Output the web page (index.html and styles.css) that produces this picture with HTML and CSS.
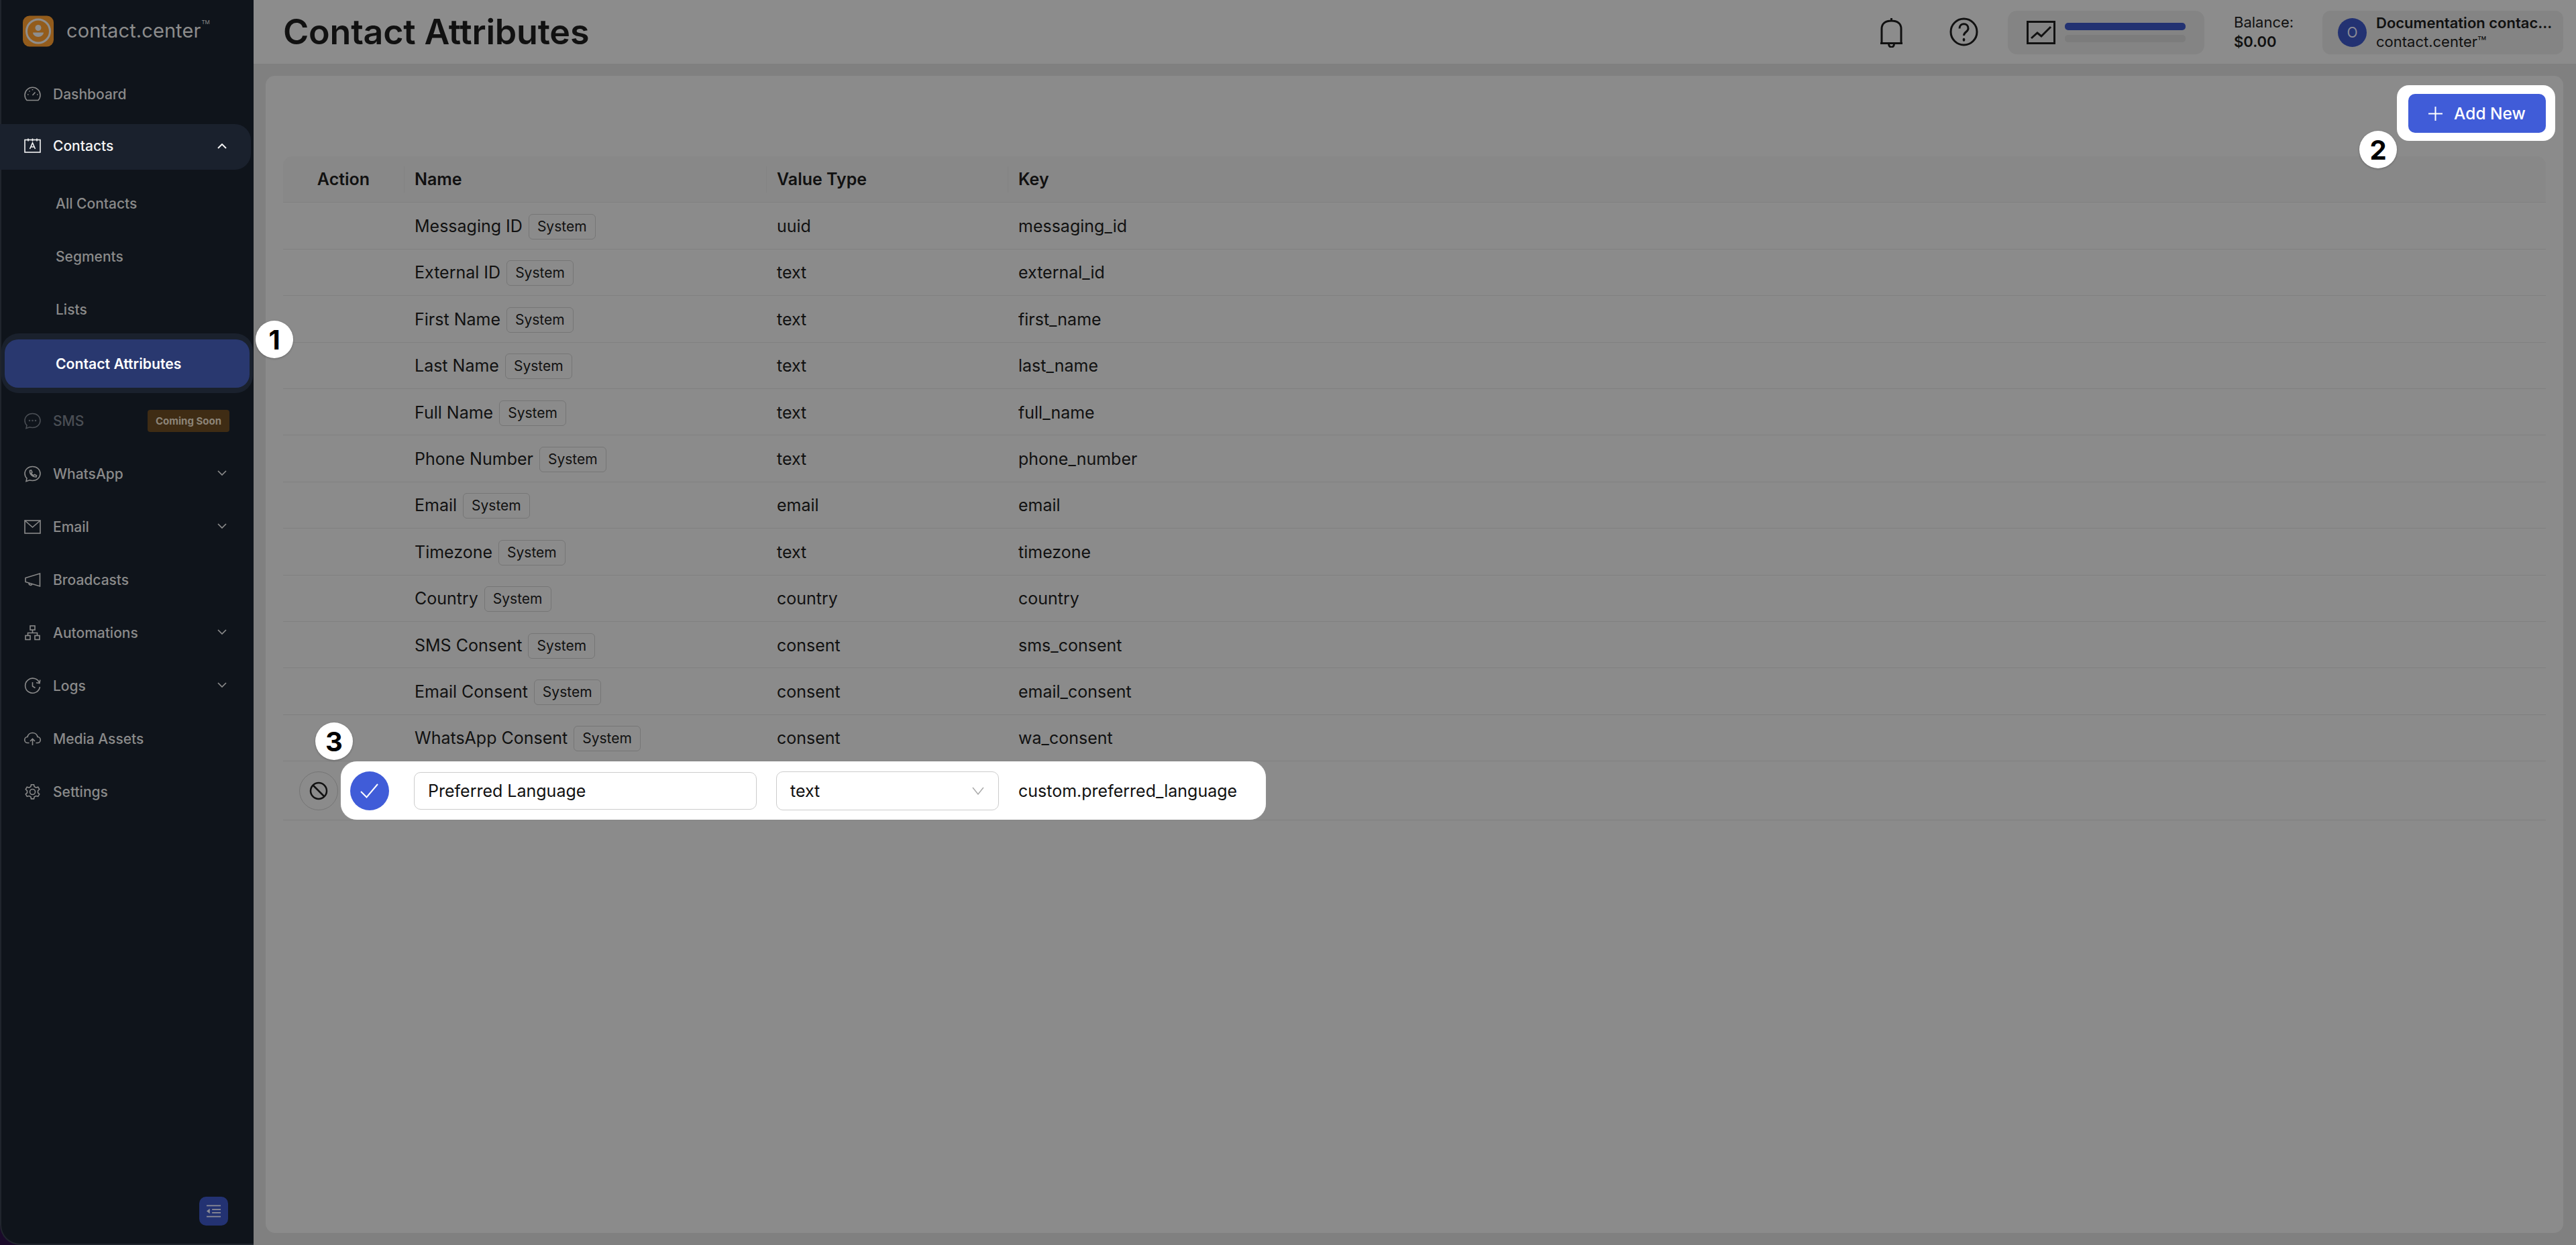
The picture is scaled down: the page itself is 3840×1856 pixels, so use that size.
FILE: index.html
```html
<!DOCTYPE html>
<html lang="en">
<head>
<meta charset="utf-8">
<title>Contact Attributes</title>
<link rel="stylesheet" href="styles.css">
</head>
<body>
<div class="app">
  <aside class="sidebar">
    <div class="brand">
      <svg class="brand-mark" viewBox="0 0 46 46"><rect width="46" height="46" rx="10" fill="#935c1c"/><circle cx="23" cy="23" r="17.5" fill="none" stroke="#8e8e8e" stroke-width="3"/><circle cx="23" cy="18" r="4.5" fill="#8e8e8e"/><path d="M15 25h16a8 6.5 0 0 1-16 0z" fill="#8e8e8e"/></svg>
      <span class="brand-name">contact.center</span><sup class="brand-tm">TM</sup>
    </div>
    <nav class="nav">
      <a class="nav-item"><svg class="nav-icon" viewBox="0 0 25 25"><path d="M4 21.500a11.500 11.500 0 1 1 17 0z"/><path d="M12.500 14l4-4.500M5 13h1.500M19 13h1.500M7.500 7.500l1 1M12.500 5v1.500"/></svg><span>Dashboard</span></a>
      <a class="nav-item nav-open"><svg class="nav-icon" viewBox="0 0 25 25"><rect x="1" y="3.500" width="23" height="18.500"/><path d="M6 1.500v4M12.500 1.500v4M19 1.500v4M8.500 17l4-9 4 9M10 14h5"/></svg><span>Contacts</span><svg class="chev" viewBox="0 0 14 8"><path d="M1 7l6-6 6 6"/></svg></a>
      <div class="subnav">
        <a class="sub-item">All Contacts</a>
        <a class="sub-item">Segments</a>
        <a class="sub-item">Lists</a>
        <div class="sub-halo"><a class="sub-active">Contact Attributes</a></div>
      </div>
      <a class="nav-item nav-dim"><svg class="nav-icon" viewBox="0 0 25 25"><path d="M12.500 1.500c6.500 0 11.500 4.500 11.500 10.500s-5 10.500-11.500 10.500c-1.500 0-3-.2-4.300-.7L3 23.500l1-4.500C2 17.200 1 14.800 1 12 1 6 6 1.500 12.500 1.500z"/><circle cx="8" cy="12" r=".5"/><circle cx="12.500" cy="12" r=".5"/><circle cx="17" cy="12" r=".5"/></svg><span>SMS</span><em class="soon">Coming Soon</em></a>
      <a class="nav-item"><svg class="nav-icon" viewBox="0 0 25 25"><path d="M12.500 1.500c6.500 0 11.500 4.500 11.500 10.500s-5 10.500-11.500 10.500c-1.500 0-3-.2-4.300-.7L3 23.500l1-4.500C2 17.200 1 14.800 1 12 1 6 6 1.500 12.500 1.500z"/><path d="M8.500 7.500l2-.5 1.500 3-1.500 1.500c.8 1.500 2 2.700 3.500 3.500l1.500-1.500 3 1.500-.5 2c-5.500.5-10-4-9.500-9.500z"/></svg><span>WhatsApp</span><svg class="chev" viewBox="0 0 14 8"><path d="M1 1l6 6 6-6"/></svg></a>
      <a class="nav-item"><svg class="nav-icon" viewBox="0 0 25 25"><rect x="1" y="3" width="23" height="19"/><path d="M1 3l11.500 10L24 3"/></svg><span>Email</span><svg class="chev" viewBox="0 0 14 8"><path d="M1 1l6 6 6-6"/></svg></a>
      <a class="nav-item"><svg class="nav-icon" viewBox="0 0 25 25"><path d="M23.500 3v19L2 15.500v-6zM7 17.500c0 3 4 4 5 1"/></svg><span>Broadcasts</span></a>
      <a class="nav-item"><svg class="nav-icon" viewBox="0 0 25 25"><rect x="9" y="2" width="7" height="6"/><rect x="2" y="16.500" width="7" height="6"/><rect x="16" y="16.500" width="7" height="6"/><path d="M12.500 8v4.500M5.500 16.500v-4h14v4"/></svg><span>Automations</span><svg class="chev" viewBox="0 0 14 8"><path d="M1 1l6 6 6-6"/></svg></a>
      <a class="nav-item"><svg class="nav-icon" viewBox="0 0 25 25"><path d="M23 8.500A11 11 0 1 0 23.500 14M23.800 3.500L23 8.500l-5-.8M12.500 7v6l4 2.500"/></svg><span>Logs</span><svg class="chev" viewBox="0 0 14 8"><path d="M1 1l6 6 6-6"/></svg></a>
      <a class="nav-item"><svg class="nav-icon" viewBox="0 0 25 25"><path d="M7.500 18.500H5.500a4.500 4.500 0 0 1-.5-9 7.700 7.700 0 0 1 15 0 4.500 4.500 0 0 1-.5 9h-2M12.500 22v-9M9 16l3.500-3.500L16 16"/></svg><span>Media Assets</span></a>
      <a class="nav-item"><svg class="nav-icon" viewBox="0 0 25 25"><circle cx="12.500" cy="12.500" r="4"/><path d="M10.500 1.800h4l.7 3 2.500 1.400 3-.9 2 3.400-2.200 2.200v2.900l2.200 2.200-2 3.400-3-.9-2.500 1.400-.7 3h-4l-.7-3-2.500-1.400-3 .9-2-3.400 2.200-2.200v-2.900L2.300 8.700l2-3.400 3 .9 2.500-1.400z"/></svg><span>Settings</span></a>
    </nav>
    <button class="collapse" type="button"><svg viewBox="0 0 24 21"><path d="M1 2h22M9.500 8h13.500M9.500 13h13.500M1 19h22"/><path class="fill" d="M6 6.500v8l-5-4z"/></svg></button>
  </aside>

  <div class="workspace">
    <header class="topbar">
      <h1 class="title">Contact Attributes</h1>
      <div class="top-tools">
        <svg class="bell" viewBox="0 0 35 46"><path d="M3 39V18C3 10 9 6 17.500 6S32 10 32 18v21M1 39.500h33M17.500 2v4M13.500 40c0 7 8 7 8 0"/></svg>
        <svg class="help" viewBox="0 0 43 43"><circle cx="21.500" cy="21.500" r="19.500"/><path d="M15 16.500c0-9 13-9 13 0 0 5-6.500 5-6.500 10.500"/><path class="dot" d="M21.500 32.500v1.500"/></svg>
        <div class="usage">
          <svg class="usage-icon" viewBox="0 0 43 35"><rect x="1.500" y="1.500" width="40" height="32"/><path d="M7 26l9-8 6 5L36 9"/></svg>
          <div class="usage-bars"><i class="bar bar-on"></i><i class="bar"></i></div>
        </div>
        <div class="balance"><span>Balance:</span><b>$0.00</b></div>
        <div class="account">
          <span class="avatar">O</span>
          <div class="account-text"><b>Documentation contac...</b><span>contact.center™</span></div>
        </div>
      </div>
    </header>

    <main class="content">
      <section class="card">
        <div class="toolbar">
          <div class="add-hl"><button class="add-btn" type="button"><svg viewBox="0 0 21 21"><path d="M10.500 0v21M0 10.500h21"/></svg>Add New</button></div>
        </div>
        <div class="table">
          <div class="row head"><div class="c-action">Action</div><div class="c-sep">Name</div><div class="c-sep">Value Type</div><div class="c-sep">Key</div></div>
          <div class="row"><div></div><div class="c-name">Messaging ID <span class="tag">System</span></div><div class="c">uuid</div><div class="c">messaging_id</div></div>
          <div class="row"><div></div><div class="c-name">External ID <span class="tag">System</span></div><div class="c">text</div><div class="c">external_id</div></div>
          <div class="row"><div></div><div class="c-name">First Name <span class="tag">System</span></div><div class="c">text</div><div class="c">first_name</div></div>
          <div class="row"><div></div><div class="c-name">Last Name <span class="tag">System</span></div><div class="c">text</div><div class="c">last_name</div></div>
          <div class="row"><div></div><div class="c-name">Full Name <span class="tag">System</span></div><div class="c">text</div><div class="c">full_name</div></div>
          <div class="row"><div></div><div class="c-name">Phone Number <span class="tag">System</span></div><div class="c">text</div><div class="c">phone_number</div></div>
          <div class="row"><div></div><div class="c-name">Email <span class="tag">System</span></div><div class="c">email</div><div class="c">email</div></div>
          <div class="row"><div></div><div class="c-name">Timezone <span class="tag">System</span></div><div class="c">text</div><div class="c">timezone</div></div>
          <div class="row"><div></div><div class="c-name">Country <span class="tag">System</span></div><div class="c">country</div><div class="c">country</div></div>
          <div class="row"><div></div><div class="c-name">SMS Consent <span class="tag">System</span></div><div class="c">consent</div><div class="c">sms_consent</div></div>
          <div class="row"><div></div><div class="c-name">Email Consent <span class="tag">System</span></div><div class="c">consent</div><div class="c">email_consent</div></div>
          <div class="row"><div></div><div class="c-name">WhatsApp Consent <span class="tag">System</span></div><div class="c">consent</div><div class="c">wa_consent</div></div>
          <div class="row edit">
            <div class="edit-hl"></div>
            <div class="edit-actions">
              <span class="round cancel"><svg viewBox="0 0 28 28"><circle cx="14" cy="14" r="12"/><path d="M5.500 5.500l17 17"/></svg></span>
              <span class="round confirm"><svg viewBox="0 0 30 30"><path d="M2 16l8.500 8.500L27 5"/></svg></span>
            </div>
            <div class="edit-cell"><div class="field name-field">Preferred Language</div></div>
            <div class="edit-cell"><div class="field select-field">text<svg viewBox="0 0 18 12"><path d="M1 1l8 10 8-10"/></svg></div></div>
            <div class="c edit-key">custom.preferred_language</div>
          </div>
        </div>
      </section>
    </main>
  </div>

  <span class="step step-1">1</span>
  <span class="step step-2">2</span>
  <span class="step step-3">3</span>
</div>
</body>
</html>
```

FILE: styles.css
```css
* { box-sizing: border-box; }
html, body { margin: 0; height: 100%; }
body { background: #1a0a2a; font-family: Inter, "Liberation Sans", sans-serif; color: #111; overflow: hidden; }
.app { position: relative; display: flex; height: 1856px; width: 3840px; }

/* Sidebar */
.sidebar { position: relative; flex: 0 0 378px; background: #0f141b; border-left: 2px solid #20252d; border-bottom: 2px solid #20252d; border-bottom-left-radius: 30px; }
.brand { height: 99px; margin-left: -2px; padding: 23px 0 0 34px; display: flex; align-items: flex-start; }
.brand-mark { width: 46px; height: 47px; flex: none; }
.brand-name { margin-left: 19px; font-size: 29px; line-height: 46px; color: #8c8c8c; letter-spacing: .1px; }
.brand-tm { font-size: 8px; line-height: 1; color: #8c8c8c; margin: 6px 0 0 1px; }
.nav { display: flex; flex-direction: column; margin-left: -2px; padding-top: 2px; }
.nav-item { height: 79px; display: flex; align-items: center; padding-left: 36px; padding-right: 40px; font-size: 21px; font-weight: 500; color: #8a8a8a; flex: none; }
.nav-item > span { margin-left: 18px; flex: 1; }
.nav-icon { width: 25px; height: 25px; flex: none; fill: none; stroke: #8a8a8a; stroke-width: 1.6; }
.chev { width: 14px; height: 8px; flex: none; fill: none; stroke: #8a8a8a; stroke-width: 1.7; margin-top: -4px; }
.nav-open { height: 68px; margin: 5px 4px 4px 0; padding-right: 36px; padding-bottom: 3px; background: #1a212d; border-radius: 0 24px 24px 0; color: #f4f4f4; }
.nav-open .nav-icon, .nav-open .chev { stroke: #f4f4f4; }
.nav-open .chev { margin-top: 0; stroke-width: 2; }
.nav-dim { color: #4a4e54; margin-top: 2.500px; }
.nav-dim .nav-icon { stroke: #4a4e54; }
.soon { flex: none; width: 122px; height: 33px; margin-right: -4px; background: #3f2c14; border-radius: 4px; color: #8c8478; font-style: normal; font-weight: 700; font-size: 15px; line-height: 33px; text-align: center; }
.subnav { display: flex; flex-direction: column; padding-top: 7px; }
.sub-item { height: 79px; display: flex; align-items: center; padding-left: 83px; font-size: 21px; font-weight: 500; color: #8a8a8a; flex: none; }
.sub-halo { margin: -4.500px 1px 0 2px; height: 89px; padding: 9px 5px; background: #1a212d; border-radius: 26px; flex: none; }
.sub-active { height: 72px; display: flex; align-items: center; padding-left: 76px; background: #29386f; border-radius: 20px; color: #fff; font-size: 21.200px; font-weight: 600; }
.collapse { position: absolute; left: 295px; bottom: 27px; width: 43px; height: 43px; padding: 11px 10px; border: 0; border-radius: 10px; background: #233272; display: flex; }
.collapse svg { width: 23px; height: 21px; fill: none; stroke: #8c8c96; stroke-width: 2; }
.collapse .fill { fill: #8c8c96; stroke: none; }

/* Top bar */
.workspace { flex: 1; display: flex; flex-direction: column; min-width: 0; background: #808080; }
.topbar { height: 95px; flex: none; background: #8c8c8c; display: flex; align-items: center; justify-content: space-between; padding: 0 19px 0 44px; }
.title { margin: 0; font-size: 52px; font-weight: 600; letter-spacing: -.2px; color: #111; }
.top-tools { display: flex; align-items: center; }
.bell { width: 35px; height: 46px; fill: none; stroke: #111; stroke-width: 3; }
.help { width: 43px; height: 43px; margin-left: 69px; fill: none; stroke: #111; stroke-width: 3; }
.help .dot { stroke-linecap: round; stroke-width: 3.500; }
.usage { width: 293px; height: 65px; margin-left: 44px; padding: 0 28px; display: flex; align-items: center; gap: 14px; background: #848484; border-radius: 14px; margin-top: 1px; }
.usage-icon { width: 43px; height: 35px; flex: none; fill: none; stroke: #111; stroke-width: 3; }
.usage-bars { flex: 1; display: flex; flex-direction: column; gap: 7px; }
.bar { display: block; height: 11px; border-radius: 5px; background: #7c7c7c; }
.bar-on { background: #233272; }
.balance { width: 132px; margin-left: 44px; display: flex; flex-direction: column; gap: 4px; font-size: 22px; line-height: 25px; }
.balance b { font-weight: 600; }
.account { width: 359px; height: 65px; padding-left: 23px; display: flex; align-items: center; gap: 14px; background: #848484; border-radius: 12px; margin-top: 1px; }
.avatar { width: 43px; height: 43px; border-radius: 50%; background: #233272; color: #8c8c96; font-size: 21px; display: flex; align-items: center; justify-content: center; flex: none; }
.account-text { display: flex; flex-direction: column; gap: 3px; font-size: 22px; line-height: 25px; white-space: nowrap; }
.account-text b { font-weight: 600; }

/* Card */
.content { flex: 1; padding: 18px 19px 18px 18px; min-height: 0; }
.card { height: 100%; background: #8b8b8b; border-radius: 14px; padding: 14px 26px 0; }
.toolbar { display: flex; justify-content: flex-end; margin-right: -14px; margin-bottom: 23px; }
.add-hl { width: 236px; height: 83px; padding: 13px 14px 12px 17px; background: #fff; border-radius: 18px; }
.add-btn { width: 205px; height: 58px; border: 0; border-radius: 10px; background: #405cd8; color: #fff; font: 500 24.500px Inter, "Liberation Sans", sans-serif; display: flex; align-items: center; justify-content: center; gap: 17px; padding: 0; }
.add-btn svg { width: 21px; height: 21px; fill: none; stroke: #fff; stroke-width: 2; }

/* Table */
.row { display: grid; grid-template-columns: 180px 540px 360px 1fr; align-items: center; height: 69.400px; padding-top: 1px; border-bottom: 1px solid #808080; font-size: 25px; line-height: 30px; }
.head { background: #888; border-radius: 14px 14px 0 0; font-weight: 600; padding-top: 0; }
.c-action { text-align: center; }
.c-sep { height: 39px; padding-left: 15px; border-left: 1px solid #838383; display: flex; align-items: center; }
.c { padding-left: 16px; }
.c-name { padding-left: 16px; display: flex; align-items: center; gap: 9px; }
.tag { height: 38px; padding: 0 12px; border: 1px solid #767676; border-radius: 6px; font-size: 21px; line-height: 36px; margin-top: 2px; }
.edit { position: relative; height: 88px; padding-top: 0; }
.edit-hl { position: absolute; left: 86px; top: 0; width: 1379px; height: 87px; background: #fff; border-radius: 24px; box-shadow: 0 0 1px #ccc; }
.edit-actions { position: relative; display: flex; gap: 18px; padding-left: 24px; }
.round { width: 58px; height: 58px; border-radius: 50%; display: flex; align-items: center; justify-content: center; }
.cancel svg { width: 28px; height: 28px; fill: none; stroke: #111; stroke-width: 2.500; }
.cancel { border: 1px solid #757575; }
.confirm { background: #405cd8; }
.confirm svg { width: 30px; height: 30px; fill: none; stroke: #fff; stroke-width: 2; }
.edit-cell { position: relative; padding-left: 15px; }
.field { border: 1px solid #ccc; border-radius: 10px; background: #fff; display: flex; align-items: center; }
.name-field { width: 511px; height: 56px; padding-left: 20px; }
.select-field { width: 332px; height: 58px; padding: 0 21px 0 20px; justify-content: space-between; }
.select-field svg { width: 18px; height: 12px; fill: none; stroke: #aaa; stroke-width: 1.500; }
.edit-key { position: relative; }

/* Step markers */
.step { position: absolute; width: 56px; height: 56px; border-radius: 50%; background: #fff; display: flex; align-items: center; justify-content: center; font-size: 40px; font-weight: 700; color: #000; box-shadow: 0 1px 3px rgba(0,0,0,.25); }
.step-1 { left: 381px; top: 478px; }
.step-2 { left: 3517px; top: 195px; }
.step-3 { left: 470px; top: 1077px; }
```
